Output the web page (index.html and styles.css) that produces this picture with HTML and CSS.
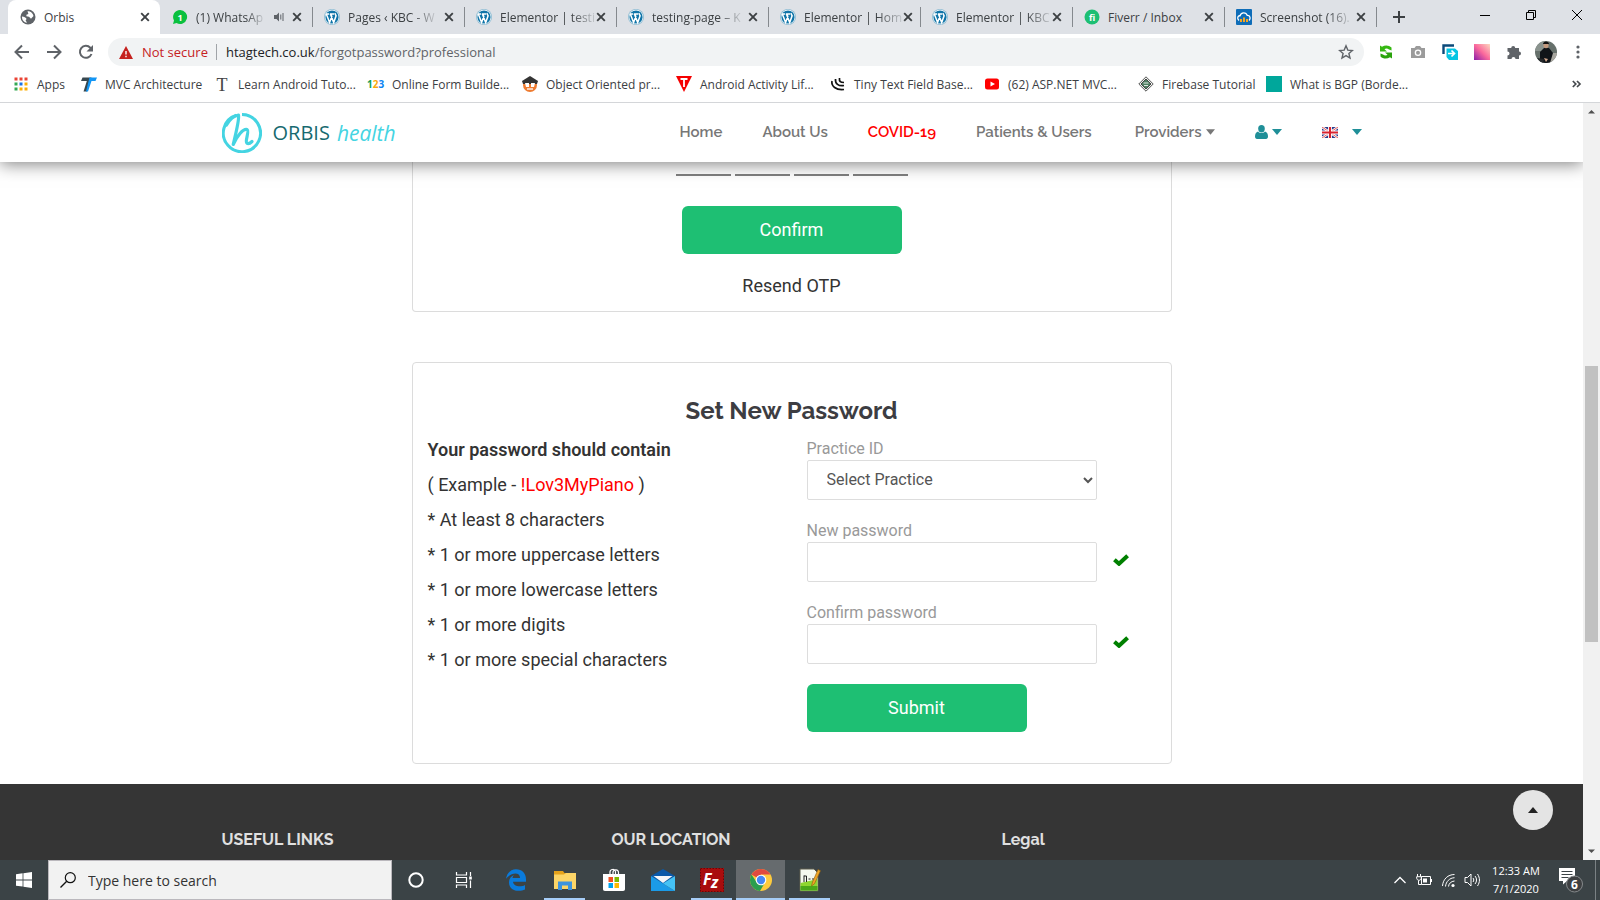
FILE: index.html
```html
<!DOCTYPE html>
<html lang="en">
<head>
<meta charset="utf-8">
<title>Orbis</title>
<link rel="stylesheet" href="styles.css">
</head>
<body>
<svg class="defs" aria-hidden="true">
  <symbol id="wp" viewBox="0 0 16 16"><circle cx="8" cy="8" r="8" fill="#8fbdd4"/><circle cx="8" cy="8" r="7.2" fill="#fff"/><circle cx="8" cy="8" r="6.6" fill="#0f74a8"/><path d="M2.4 5.2l3.2 8.2 2.2-6-1-2.5M6.4 5l3.3 8.6 2.4-6.8-1.3-2.6M1.8 5h3.4M6 5h4" fill="none" stroke="#fff" stroke-width="1.5"/></symbol>
  <symbol id="x" viewBox="0 0 16 16"><path d="M4.2 4.2l7.6 7.6M11.8 4.2l-7.6 7.6" stroke="#3c4043" stroke-width="1.9" fill="none"/></symbol>
  <symbol id="caret" viewBox="0 0 10 6"><path d="M0 0h10L5 6z" fill="currentColor"/></symbol>
  <symbol id="check" viewBox="0 0 16 12"><path d="M1.400 5.800l4.600 4L14.600 1.700" fill="none" stroke="green" stroke-width="4"/></symbol>
</svg>

<header class="browser">
  <div class="tabs">
    <div class="tab active"><svg class="fav" viewBox="0 0 16 16"><circle cx="8" cy="8" r="7.5" fill="#5f6368"/><path d="M2 7.5c2 .2 4 1 4.600 2.500l-1 1.300L7 13.800C4 13.500 1.800 11 2 7.500zM7.500 2.200c3-.4 5.500 2 6 4.800l-2.500 2.800-2-2-2.600-.6V5.800l2-.8z" fill="#fff"/></svg><span class="tab-title">Orbis</span><button class="close" aria-label="Close tab"><svg><use href="#x"/></svg></button></div>
    <div class="tab"><svg class="fav" viewBox="0 0 16 16"><path d="M8 1a7 7 0 1 1-3.500 13L1 15l1-3.500A7 7 0 0 1 8 1z" fill="#0ac03e"/><text x="8" y="11.500" text-anchor="middle" class="g-one">1</text></svg><span class="tab-title fade">(1) WhatsAp</span><svg class="audio" viewBox="0 0 12 12"><path d="M1 4h2.500L6 1.500v9L3.500 8H1z" fill="#5f6368"/><path d="M7.800 3.500v5M10 2v8" stroke="#5f6368" stroke-width="1"/></svg><button class="close" aria-label="Close tab"><svg><use href="#x"/></svg></button></div>
    <div class="tab"><svg class="fav"><use href="#wp"/></svg><span class="tab-title fade">Pages ‹ KBC - W</span><button class="close" aria-label="Close tab"><svg><use href="#x"/></svg></button></div>
    <div class="tab"><svg class="fav"><use href="#wp"/></svg><span class="tab-title fade">Elementor | testi</span><button class="close" aria-label="Close tab"><svg><use href="#x"/></svg></button></div>
    <div class="tab"><svg class="fav"><use href="#wp"/></svg><span class="tab-title fade">testing-page – K</span><button class="close" aria-label="Close tab"><svg><use href="#x"/></svg></button></div>
    <div class="tab"><svg class="fav"><use href="#wp"/></svg><span class="tab-title fade">Elementor | Hom</span><button class="close" aria-label="Close tab"><svg><use href="#x"/></svg></button></div>
    <div class="tab"><svg class="fav"><use href="#wp"/></svg><span class="tab-title fade">Elementor | KBC</span><button class="close" aria-label="Close tab"><svg><use href="#x"/></svg></button></div>
    <div class="tab"><svg class="fav" viewBox="0 0 16 16"><circle cx="8" cy="8" r="7.500" fill="#1dbf73"/><text x="8" y="11.500" text-anchor="middle" class="g-fi">fi</text></svg><span class="tab-title">Fiverr / Inbox</span><button class="close" aria-label="Close tab"><svg><use href="#x"/></svg></button></div>
    <div class="tab"><svg class="fav" viewBox="0 0 16 16"><rect width="16" height="16" rx="1" fill="#0f6db8"/><path d="M3 11.500C.5 9.500 2 6.500 4 6.800 5 3 10 2.800 11.200 6.300c3-.2 3.800 3.200 1.800 5.200" fill="none" stroke="#fff" stroke-width="1.300"/><path d="M4 10h2v3H4zM7 8.500h2V13H7zM10 10h2v3h-2z" fill="#f5a623"/></svg><span class="tab-title fade">Screenshot (16).</span><button class="close" aria-label="Close tab"><svg><use href="#x"/></svg></button></div>
    <button class="newtab" aria-label="New tab"><svg viewBox="0 0 12 12"><path d="M6 0v12M0 6h12" stroke="#3c4043" stroke-width="2"/></svg></button>
    <div class="winbtns">
      <button aria-label="Minimize"><svg viewBox="0 0 12 12"><path d="M1 6.500h10" stroke="#000"/></svg></button>
      <button aria-label="Restore"><svg viewBox="0 0 12 12"><path d="M1.500 3.500h7v7h-7zM3.500 3.500v-2h7v7h-2" fill="none" stroke="#000"/></svg></button>
      <button aria-label="Close"><svg viewBox="0 0 12 12"><path d="M1 1l10 10M11 1L1 11" stroke="#000"/></svg></button>
    </div>
  </div>

  <div class="toolbar">
    <div class="navbtns">
      <button aria-label="Back"><svg viewBox="0 0 16 16"><path d="M15 8H2M8 1.500L1.500 8 8 14.500" fill="none" stroke="#5f6368" stroke-width="2"/></svg></button>
      <button aria-label="Forward"><svg viewBox="0 0 16 16"><path d="M1 8h13M8 1.500L14.500 8 8 14.500" fill="none" stroke="#5f6368" stroke-width="2"/></svg></button>
      <button aria-label="Reload"><svg viewBox="0 0 16 16"><path d="M13.500 10A6 6 0 1 1 12.300 3.700L14 5.500" fill="none" stroke="#5f6368" stroke-width="2"/><path d="M15 1v6.500H8.500z" fill="#5f6368"/></svg></button>
    </div>
    <div class="omnibox">
      <svg class="warn" viewBox="0 0 14 13"><path d="M7 0l7 13H0z" fill="#c5221f"/><path d="M7 5v3.500M7 9.800v1.500" stroke="#fff" stroke-width="1.400"/></svg>
      <span class="insecure">Not secure</span>
      <span class="url"><b>htagtech.co.uk</b>/forgotpassword?professional</span>
      <svg class="star" viewBox="0 0 16 16"><path d="M8 1.800l1.800 4.300 4.600.4-3.500 3 1.100 4.500L8 11.600 4 14l1.100-4.500-3.500-3 4.600-.4z" fill="none" stroke="#5f6368" stroke-width="1.400"/></svg>
    </div>
    <div class="exts">
      <svg viewBox="0 0 16 16"><path d="M2 7.500V1.500l2 1.200C7 .8 11 1 13.500 3.500v3L11 5.500C9.500 4.300 7.500 4.300 6.500 5.300L9 7.500z" fill="#35b812"/><path d="M14 8.500v6l-2-1.200c-3 1.900-7 1.700-9.500-.8v-3L5 10.500c1.500 1.200 3.500 1.200 4.500.2L7 8.500z" fill="#2aa30c"/></svg>
      <svg viewBox="0 0 16 16"><path d="M1 4h3.500L6 2h4l1.500 2H15v10H1z" fill="#9b9b9b"/><circle cx="8" cy="8.800" r="3.300" fill="#fff"/><circle cx="8" cy="8.800" r="2" fill="#9b9b9b"/></svg>
      <svg viewBox="0 0 16 16"><path d="M1.500 10V1.500H12" fill="none" stroke="#0b4a7a" stroke-width="2.400"/><path d="M4.500 4.500h8.500l3 2.500v9H7l-2.500-3z" fill="#06c5e3"/><path d="M6 9.500h6M9.500 6.500l3 3-3 3" fill="none" stroke="#fff" stroke-width="1.700"/></svg>
      <i class="grad"></i>
      <svg viewBox="0 0 16 16"><path d="M1.500 4h3.700a2 2 0 1 1 4 0H13v3.500a2 2 0 1 1 0 4V15H9.500a2 2 0 1 0-4 0h-4v-3.500a2 2 0 1 0 0-4z" fill="#5f6368"/></svg>
      <svg class="avatar" viewBox="0 0 22 22"><clipPath id="av"><circle cx="11" cy="11" r="11"/></clipPath><g clip-path="url(#av)"><path d="M0 0h22v22H0z" fill="#66706b"/><path d="M0 0h9v10H0z" fill="#8a938e"/><path d="M13 12h9v10h-9z" fill="#a8a69f"/><path d="M5 22V11l4-4h5l4 5-3 10z" fill="#101418"/><circle cx="11" cy="4.600" r="2.600" fill="#c49a7e"/><path d="M8 3c0-3.500 6-3.500 6 0z" fill="#111"/><path d="M2 17l7 1-1 4H4z" fill="#25282b"/><path d="M9 17l4 1-2 3z" fill="#d1a78c"/></g></svg>
      <svg viewBox="0 0 16 16"><circle cx="8" cy="3" r="1.600" fill="#5f6368"/><circle cx="8" cy="8" r="1.600" fill="#5f6368"/><circle cx="8" cy="13" r="1.600" fill="#5f6368"/></svg>
    </div>
  </div>

  <nav class="bookmarks" aria-label="Bookmarks">
    <a href="#"><svg viewBox="0 0 16 16"><path d="M1.500 1.500h3v3h-3zM6.500 1.500h3v3h-3zM11.500 1.500h3v3h-3z" fill="#ea4335"/><path d="M1.500 6.500h3v3h-3zM1.500 11.500h3v3h-3z" fill="#34a853"/><path d="M6.500 6.500h3v3h-3z" fill="#1a73e8"/><path d="M11.500 6.500h3v3h-3zM6.500 11.500h3v3h-3zM11.500 11.500h3v3h-3z" fill="#fbae05"/></svg><span>Apps</span></a>
    <a href="#"><svg viewBox="0 0 16 16"><path d="M1.500 1.500h9L9.500 5H0z" fill="#37474f"/><path d="M6 4.500h3.500L6 15.500H2.500z" fill="#37474f"/><path d="M8.500 1.500H16L14.500 5h-4L7 15.500H5z" fill="#1296f5"/></svg><span>MVC Architecture</span></a>
    <a href="#"><svg viewBox="0 0 16 16"><text x="8" y="14.500" text-anchor="middle" class="g-t">T</text></svg><span>Learn Android Tuto...</span></a>
    <a href="#"><svg viewBox="0 0 16 16"><text x="-1" y="12" class="g-123"><tspan fill="#0f9d58">1</tspan><tspan fill="#f9a80c">2</tspan><tspan fill="#0b84f3">3</tspan></text></svg><span>Online Form Builde...</span></a>
    <a href="#"><svg viewBox="0 0 16 16"><circle cx="8" cy="9" r="7" fill="#ee7b30"/><path d="M0 5l8-5 8 5-1 3H1z" fill="#343434"/><path d="M3 7h4v4H4zM9 7h4l-1 4H9z" fill="#fff"/><path d="M5 13h6" stroke="#fff" stroke-width="1.300"/></svg><span>Object Oriented pr...</span></a>
    <a href="#"><svg viewBox="0 0 16 16"><path d="M0 0h16L8 16z" fill="#f50000"/><path d="M4.500 3h7M8 3v8" stroke="#fff" stroke-width="1.800"/></svg><span>Android Activity Lif...</span></a>
    <a href="#"><svg viewBox="0 0 16 16"><path d="M2 5c-1 5 4 9.500 12 8.500M5.500 3c-.5 4.500 3 7.500 8.500 6.500M9.500 2c-.5 3.500 1 4.500 4.500 4.500" fill="none" stroke="#111" stroke-width="1.700"/></svg><span>Tiny Text Field Base...</span></a>
    <a href="#"><svg viewBox="0 0 16 16"><rect x="1" y="2.500" width="14" height="11" rx="2.500" fill="#f00"/><path d="M6.500 5.500v5L11 8z" fill="#fff"/></svg><span>(62) ASP.NET MVC...</span></a>
    <a href="#"><svg viewBox="0 0 16 16"><path d="M8 .8L15.200 8 8 15.200.8 8z" fill="#f0f3f0" stroke="#555"/><path d="M8 3L13 8l-5 5-5-5z" fill="#4d7f61" stroke="#444"/><path d="M5.500 7h5M6 9.500h4" stroke="#dfe8e2"/></svg><span>Firebase Tutorial</span></a>
    <a href="#"><svg viewBox="0 0 16 16"><path d="M0 0h16v16H0z" fill="#00a79b"/></svg><span>What is BGP (Borde...</span></a>
    <button class="more" aria-label="More bookmarks"><svg viewBox="0 0 10 10"><path d="M1.500 2.500L4 5 1.500 7.500M5 2.500L7.500 5 5 7.500" fill="none" stroke="#45494d" stroke-width="1.400"/></svg></button>
  </nav>
</header>

<div class="viewport">
  <div class="page">
    <header class="site-head">
      <div class="container head-row">
        <a class="logo" href="#">
          <svg viewBox="0 0 40 40"><path d="M14.500 2.300A18.600 18.600 0 1 0 20 1.500" fill="none" stroke="#44d4e2" stroke-width="3"/><path d="M4.500 12C8 6 13 2.500 16.500 2.200c1 4-2.800 19-5.300 29.300C15 23 21 15.500 25 16.500c3 1-3 13 .5 14 2 .3 3-.5 4.500-2" fill="none" stroke="#44d4e2" stroke-width="3.200" stroke-linecap="round" stroke-linejoin="round"/></svg>
          <span class="orbis">ORBIS</span><em>health</em>
        </a>
        <nav class="menu" aria-label="Main">
          <a href="#">Home</a>
          <a href="#">About Us</a>
          <a href="#" class="alert">COVID-19</a>
          <a href="#">Patients &amp; Users</a>
          <a href="#" class="prov">Providers<svg class="caret"><use href="#caret"/></svg></a>
          <a href="#" class="teal user" aria-label="Account"><svg class="person" viewBox="0 0 13 14"><ellipse cx="6.500" cy="3.700" rx="3.300" ry="3.700" fill="#1f8f98"/><path d="M3 6.500C1 7 0 9 0 11.500 0 13 .8 14 2 14h9c1.200 0 2-1 2-2.500C13 9 12 7 10 6.500c-2 2-5 2-7 0z" fill="#1f8f98"/></svg><svg class="caret"><use href="#caret"/></svg></a>
          <a href="#" class="teal lang" aria-label="Language"><svg class="flag" viewBox="0 0 16 11"><path d="M0 0h16v11H0z" fill="#2b3c8c"/><path d="M0 0l16 11M16 0L0 11" stroke="#fff" stroke-width="2.400"/><path d="M0 0l16 11M16 0L0 11" stroke="#d33" stroke-width=".8"/><path d="M8 0v11M0 5.500h16" stroke="#fff" stroke-width="3.800"/><path d="M8 0v11M0 5.500h16" stroke="#d8222f" stroke-width="2"/></svg><svg class="caret"><use href="#caret"/></svg></a>
        </nav>
      </div>
    </header>

    <main>
      <section class="card otp">
        <div class="digits">
          <input aria-label="Digit 1"><input aria-label="Digit 2"><input aria-label="Digit 3"><input aria-label="Digit 4">
        </div>
        <button class="btn">Confirm</button>
        <a class="resend" href="#">Resend OTP</a>
      </section>

      <section class="card setpw">
        <h2>Set New Password</h2>
        <div class="cols">
          <div class="rules">
            <p><b>Your password should contain</b></p>
            <p>( Example - <span class="red">!Lov3MyPiano</span> )</p>
            <p>* At least 8 characters</p>
            <p>* 1 or more uppercase letters</p>
            <p>* 1 or more lowercase letters</p>
            <p>* 1 or more digits</p>
            <p>* 1 or more special characters</p>
          </div>
          <form class="form">
            <div class="field"><label for="practice">Practice ID</label><div class="line"><select id="practice"><option>Select Practice</option></select></div></div>
            <div class="field"><label for="pw">New password</label><div class="line"><input id="pw" type="password"><svg class="ok"><use href="#check"/></svg></div></div>
            <div class="field"><label for="pw2">Confirm password</label><div class="line"><input id="pw2" type="password"><svg class="ok"><use href="#check"/></svg></div></div>
            <button class="btn" type="button">Submit</button>
          </form>
        </div>
      </section>
    </main>

    <footer class="site-foot">
      <div class="container foot-row"><h3>USEFUL LINKS</h3><h3>OUR LOCATION</h3><h3>Legal</h3></div>
      <button class="totop" aria-label="Back to top"><svg viewBox="0 0 10 6"><path d="M0 6h10L5 0z" fill="#222"/></svg></button>
    </footer>
  </div>
  <div class="scroll" aria-hidden="true">
    <svg viewBox="0 0 17 17"><path d="M5 10.500h7L8.500 7z" fill="#505050"/></svg>
    <i class="above"></i><i class="thumb"></i><i class="below"></i>
    <svg viewBox="0 0 17 17"><path d="M5 6.500h7L8.500 10z" fill="#505050"/></svg>
  </div>
</div>

<footer class="taskbar">
  <button class="start" aria-label="Start"><svg viewBox="0 0 16 16"><path d="M0 2.200L6.600 1.300v6.200H0zM7.400 1.200L16 0v7.500H7.400zM0 8.400h6.600v6.200L0 13.800zM7.400 8.400H16V16l-8.600-1.200z" fill="#fff"/></svg></button>
  <label class="search"><svg viewBox="0 0 16 16"><circle cx="10.300" cy="5.700" r="5" fill="none" stroke="#111" stroke-width="1.200"/><path d="M6.700 9.300L.5 15.500" stroke="#111" stroke-width="1.300"/></svg><input type="text" placeholder="Type here to search" aria-label="Search"></label>
  <div class="apps">
    <button class="sys" aria-label="Cortana"><svg viewBox="0 0 24 24"><circle cx="12" cy="12" r="6.700" fill="none" stroke="#fff" stroke-width="2"/></svg></button>
    <button class="sys" aria-label="Task view"><svg viewBox="0 0 24 24"><path d="M4.500 4v3h10V4M4.500 20v-3h10v3M4.500 9.500h10v5h-10zM18.500 4v4M18.500 12.500V20" fill="none" stroke="#fff" stroke-width="1.200"/><path d="M17.200 8.500h2.600v3h-2.600z" fill="#fff"/></svg></button>
    <button class="pin" aria-label="Edge"><svg viewBox="0 0 24 24"><path d="M2 10.800C3 4.500 7.200 1.200 12 1.200c6 0 10 4 10 10v2.500H9c.4 5 8 5.800 12 3.200v4.500c-5 2.600-16 2.400-16-7.200 0-3.500 2-6 5-7.300-1 1-1.300 2-1.500 3H16c.2-6-8.500-6.200-14 .9z" fill="#0a7bdc"/></svg></button>
    <button class="open" aria-label="File Explorer"><svg viewBox="0 0 24 24"><path d="M1 3h9l1.500 2H23v16H1z" fill="#e5a21b"/><path d="M1 6.500h10L13 5h10v16H1z" fill="#fcd567"/><path d="M5 22v-8.500h14V22h-4v-4.500H9V22z" fill="#3e93dd"/></svg></button>
    <button aria-label="Store"><svg viewBox="0 0 24 24"><path d="M8 7V4c0-3 5-3.500 5.500-.5V7M11 7V4c.5-3 5.500-3 5.500.5V7" fill="none" stroke="#fff" stroke-width="1.200"/><path d="M1 6h22v15c0 1-.6 2-2 2H3c-1.400 0-2-1-2-2z" fill="#fff"/><path d="M6.500 9H11v5H6.500z" fill="#f25022"/><path d="M12.500 9H17v5h-4.500z" fill="#7fba00"/><path d="M6.500 15H11v5H6.500z" fill="#00a4ef"/><path d="M12.500 15H17v5h-4.500z" fill="#ffb900"/></svg></button>
    <button aria-label="Mail"><svg viewBox="0 0 24 24"><path d="M0 8l12-7 12 7-12 8z" fill="#0a58a8"/><path d="M2.500 8h19L12 15z" fill="#f4f6f8"/><path d="M0 8l24 15H0z" fill="#1b9be8"/><path d="M24 8L12 15.500 24 23z" fill="#45c2f5"/></svg></button>
    <button class="open" aria-label="FileZilla"><svg viewBox="0 0 24 24"><path d="M0 0h24v24H0z" fill="#a90d0d"/><path d="M.5.5h23v23H.5z" fill="none" stroke="#680808" stroke-dasharray="1.500 1.500"/><text x="3" y="17" class="g-f">F</text><text x="11" y="20" class="g-f">z</text></svg></button>
    <button class="open current" aria-label="Chrome"><svg viewBox="0 0 24 24"><circle cx="12" cy="12" r="11" fill="#fdcb3e"/><path d="M12 12L2.500 6.500A11 11 0 0 1 21.500 6.500H12z" fill="#e04a3f"/><path d="M2.500 6.500A11 11 0 0 0 11 23l5-8.500-4-2.500-4.500 2z" fill="#2a9e50"/><circle cx="12" cy="12" r="5.300" fill="#fff"/><circle cx="12" cy="12" r="4.200" fill="#4688f4"/></svg></button>
    <button class="open" aria-label="Notepad++"><svg viewBox="0 0 24 24"><path d="M2 1h14l4 4v18H2z" fill="#f5f8ee" stroke="#5b5b4a"/><path d="M2.500 15l17-4v11.500h-17z" fill="#8ed630"/><path d="M2.500 18h17v4.500h-17z" fill="#4ba81a"/><path d="M6 7.500v6.500M6 8h2.500v6M10.500 11h2M14 11h2" stroke="#222" fill="none"/><path d="M13.500 18l1-4L20 1.500l2.500 1.200-6 13z" fill="#f0a524" stroke="#8a5a10" stroke-width=".6"/></svg></button>
  </div>
  <div class="tray">
    <svg viewBox="0 0 16 16"><path d="M2.500 11L8 5.500l5.500 5.500" fill="none" stroke="#fff" stroke-width="1.300"/></svg>
    <svg viewBox="0 0 16 16"><path d="M5.500 4.500h9v8h-9zM15.500 7v3M2.500 8.500v4h3M1.500 2v2.500M4.500 2v2.500M.7 4.700h4.600v1.500C5 9 1 9 .7 6.200z" fill="none" stroke="#fff"/><path d="M7 6.500h4v4H7z" fill="#fff"/></svg>
    <svg viewBox="0 0 16 16"><path d="M2.500 14C3 7 8 2.500 14.500 2.500M5.500 14.500c.5-5 4-8.500 9-8.800M8.500 14.500c.3-3 2.500-5.200 6-5.500" fill="none" stroke="#fff"/><circle cx="13" cy="13.500" r="1.600" fill="#fff"/></svg>
    <svg viewBox="0 0 16 16"><path d="M1 5.500h2.500L7 2v12l-3.500-3.500H1zM9 6c1 1.300 1 2.700 0 4M11 4c2 2.500 2 5.500 0 8M13.500 2c2.600 4 2.600 8 0 12" fill="none" stroke="#fff"/></svg>
    <div class="clock"><span>12:33 AM</span><span>7/1/2020</span></div>
    <button class="notif" aria-label="Notifications"><svg viewBox="0 0 26 26"><path d="M1 1h16v13H9l-4 3.500V14H1z" fill="#fff"/><path d="M3.500 4.500h11M3.500 7.500h11M3.500 10.500h7" stroke="#3b4346"/><circle cx="16.500" cy="17" r="8" fill="#3d3f41" stroke="#85898b"/><text x="16.500" y="21.500" text-anchor="middle" class="g-6">6</text></svg></button>
    <i class="peek"></i>
  </div>
</footer>
</body>
</html>
```
FILE: styles.css
```css
* { box-sizing: border-box; }
body { margin: 0; height: 100vh; display: flex; flex-direction: column; overflow: hidden; font-family: Roboto, sans-serif; background: #fff; color: #333; }
button { border: 0; background: none; padding: 0; font: inherit; display: flex; align-items: center; justify-content: center; }
a { color: inherit; text-decoration: none; }
svg { flex: none; display: block; }
.defs { width: 0; height: 0; position: absolute; }

/* browser chrome */
.browser { flex: none; font-family: "Open Sans", "Noto Sans", sans-serif; font-size: 12px; color: #3c4043; border-bottom: 1px solid #d4d6d9; }
.tabs { display: flex; height: 34px; background: #dee1e6; padding-left: 8px; }
.tab { flex: none; width: 152px; display: flex; align-items: center; padding: 0 9px 0 12px; position: relative; }
.tab:not(.active)::after { content: ""; position: absolute; right: -1px; top: 7px; height: 20px; width: 1px; background: #85898e; }
.tab.active { background: #fff; border-radius: 8px 8px 0 0; }
.fav { width: 16px; height: 16px; margin-right: 8px; }
.tab-title { flex: none; white-space: nowrap; }
.fade { -webkit-mask-image: linear-gradient(90deg, #000 75%, rgba(0, 0, 0, .15)); mask-image: linear-gradient(90deg, #000 75%, rgba(0, 0, 0, .15)); }
.audio { width: 12px; height: 12px; margin: 0 -4px 0 auto; }
.close { width: 12px; height: 16px; margin-left: auto; }
.close svg { width: 16px; height: 16px; }
.newtab { width: 46px; }
.newtab svg { width: 12px; height: 12px; }
.winbtns { margin-left: auto; display: flex; height: 29px; }
.winbtns button { width: 46px; }
.winbtns svg { width: 12px; height: 12px; }
.toolbar { display: flex; align-items: center; height: 36px; gap: 6px; }
.navbtns { display: flex; gap: 16px; padding: 0 8px 0 14px; }
.navbtns svg { width: 16px; height: 16px; }
.omnibox { flex: 1; height: 28px; border-radius: 14px; background: #f1f3f4; display: flex; align-items: center; padding: 0 10px 0 11px; font-size: 13px; }
.warn { width: 14px; height: 13px; margin-right: 9px; }
.insecure { color: #c5221f; padding-right: 8px; margin-right: 9px; border-right: 1px solid #a0a4a8; line-height: 16px; }
.url { flex: 1; color: #5f6368; }
.url b { font-weight: 400; color: #202124; }
.star { width: 16px; height: 16px; }
.exts { display: flex; align-items: center; gap: 16px; padding: 0 14px 0 8px; }
.exts svg, .grad { width: 16px; height: 16px; }
.grad { background: linear-gradient(45deg, #8a1ca8, #fb6a9c 50%, #fcd9c0); }
.exts .avatar { width: 22px; height: 22px; margin: 0 -3px; }
.bookmarks { height: 32px; padding: 0 17px 4px 13px; display: grid; grid-template-columns: 68px 133px 154px 154px 154px 154px 154px 154px 128px 1fr auto; align-items: center; }
.bookmarks a { display: flex; align-items: center; gap: 8px; white-space: nowrap; }
.bookmarks a svg { width: 16px; height: 16px; overflow: visible; }
.more svg { width: 12px; height: 12px; }
.g-one { font: bold 9px "Open Sans", sans-serif; fill: #fff; }
.g-fi { font: bold 9px "Open Sans", sans-serif; fill: #fff; }
.g-t { font: 18px "Liberation Serif", serif; fill: #444; }
.g-123 { font: bold 10px "Open Sans", sans-serif; }
.g-f { font: italic bold 16px "Open Sans", sans-serif; fill: #fff; }
.g-6 { font: bold 12px "Open Sans", sans-serif; fill: #fff; }

/* web page */
.viewport { flex: 1; min-height: 0; display: flex; }
.page { flex: 1; min-width: 0; display: flex; flex-direction: column; overflow: hidden; }
.container { width: 100%; max-width: 1170px; margin: 0 auto; padding: 0 15px; }
.site-head { flex: none; background: #fff; box-shadow: 0 2px 16px rgba(0, 0, 0, .5); position: relative; z-index: 1; }
.head-row { display: flex; align-items: center; justify-content: space-between; height: 59px; }
.logo { display: flex; align-items: center; font-family: "Open Sans", sans-serif; font-size: 20px; font-weight: 500; color: #176a70; }
.logo svg { width: 40px; height: 40px; margin-right: 11px; }
.logo em { font-size: 21px; font-weight: 400; color: #44d4e2; margin-left: 7px; }
.menu { display: flex; align-items: center; font: 600 15px Raleway, Lato, sans-serif; color: #777; padding-bottom: 1px; }
.menu a { margin-right: 40px; display: flex; align-items: center; white-space: nowrap; }
.menu .alert { color: #f00; }
.menu .prov { gap: 4px; margin-left: 3px; }
.menu .teal { color: #1f8f98; }
.menu .user { gap: 4px; }
.menu .lang { gap: 14px; margin-right: 0; }
.caret { width: 10px; height: 6px; }
.prov .caret { width: 9px; }
.person { width: 13px; height: 14px; }
.flag { width: 16px; height: 11px; }

main { flex: none; width: 760px; max-width: 100%; margin: 0 auto; }
.card { border: 1px solid #dcdcdc; border-radius: 4px; }
.otp { border-top: 0; border-radius: 0 0 4px 4px; display: flex; flex-direction: column; align-items: center; padding-bottom: 11px; font-size: 18px; }
.digits { display: flex; gap: 4px; margin-bottom: 30px; }
.digits input { width: 55px; height: 14px; border: 0; border-bottom: 2px solid #808080; outline: 0; padding: 0; background: none; }
.btn { width: 220px; height: 48px; border-radius: 6px; background: #1ebf73; color: #fff; font-size: 18px; padding-bottom: 2px; }
.resend { margin-top: 18px; line-height: 28px; }
.setpw { margin: 50px 0 20px; padding: 30px 15px 31px; }
h2 { margin: 0; text-align: center; font: bold 24px/36px Raleway, Lato, sans-serif; color: #3d3d42; }
.cols { display: grid; grid-template-columns: 1fr 1fr; column-gap: 30px; }
.rules { font-size: 18px; line-height: 35px; padding-top: 3px; }
.rules p { margin: 0; }
.rules b { font-weight: 600; }
.red { color: #f00; }
.form { font-size: 16px; padding: 7px 0 0; }
.field { margin-bottom: 20px; }
.field label { display: block; line-height: 22px; height: 22px; color: #999; }
.field:first-child label { height: 24px; line-height: 26px; }
.line { display: flex; align-items: center; gap: 16px; }
.line input, .line select { width: 290px; height: 40px; border: 1px solid #ddd; border-radius: 2px; background: #fff; font: 16px Roboto, sans-serif; color: #555; padding: 0 0 2px 15px; }
.ok { width: 16px; height: 12px; margin-bottom: 4px; }

.site-foot { flex: 1; min-height: 76px; background: #353535; position: relative; }
.foot-row { display: grid; grid-template-columns: repeat(3, 1fr); padding: 44px 0 0; }
h3 { margin: 0; padding-left: 15px; font: bold 16px/24px Raleway, Lato, sans-serif; color: #e0e0e0; }
.totop { position: absolute; right: 30px; top: 6px; width: 40px; height: 40px; border-radius: 50%; background: #e4e4e4; }
.totop svg { width: 10px; height: 6px; }
.scroll { flex: none; width: 17px; background: #f1f1f1; display: flex; flex-direction: column; }
.scroll svg { width: 17px; height: 17px; }
.above { flex: 246; }
.thumb { flex: 276; background: #c1c1c1; margin: 0 2px; }
.below { flex: 201; }

/* taskbar */
.taskbar { flex: none; height: 40px; display: flex; background: #3b4346; font-family: "Open Sans", "Noto Sans", sans-serif; color: #fff; }
.start { width: 48px; }
.start svg { width: 16px; height: 16px; }
.search { width: 344px; display: flex; align-items: center; background: #f2f2f2; border: 1px solid #bbb8bd; padding: 0 11px; gap: 12px; }
.search svg { width: 16px; height: 16px; }
.search input { flex: 1; min-width: 0; border: 0; outline: 0; background: none; padding: 0; font: 14px "Open Sans", sans-serif; }
.search input::placeholder { color: #333; opacity: 1; }
.apps { display: flex; }
.apps button { width: 49px; position: relative; }
.apps .sys { width: 48px; }
.apps .pin { margin-left: 3px; }
.apps svg { width: 24px; height: 24px; }
.open::after { content: ""; position: absolute; left: 4px; right: 4px; bottom: 0; height: 2px; background: #a6cdf7; }
.current { background: #666b6e; }
.current::after { left: 0; right: 0; }
.tray { margin-left: auto; display: flex; align-items: center; gap: 8px; padding-right: 4px; }
.tray > svg { width: 16px; height: 16px; }
.clock { width: 56px; margin: 0 6px 0 0; display: flex; flex-direction: column; align-items: center; font-size: 11px; line-height: 18px; white-space: nowrap; }
.notif svg { width: 26px; height: 26px; }
.peek { width: 1px; align-self: stretch; background: #7b8184; margin-left: 3px; }
```
